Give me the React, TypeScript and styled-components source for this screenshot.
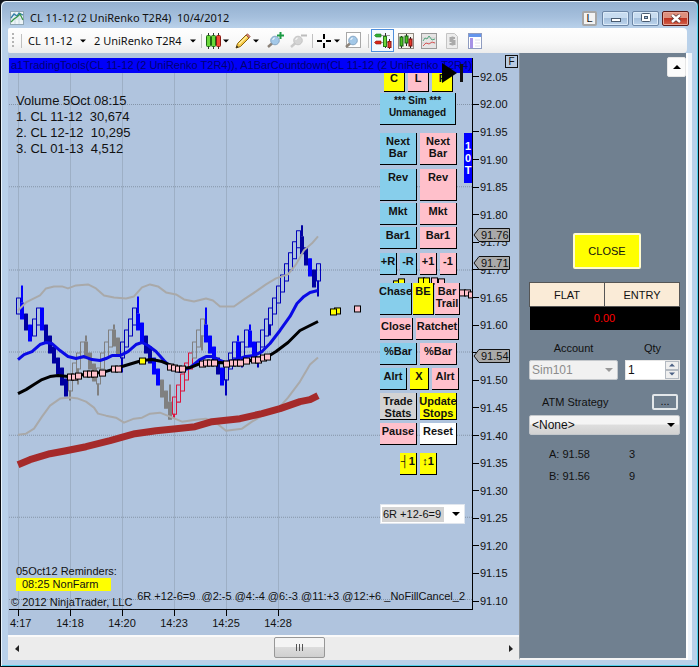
import React from "react";
import styled, { createGlobalStyle, css } from "styled-components";

const GlobalStyle = createGlobalStyle`
  *, *::before, *::after { box-sizing: border-box; }
  body { margin: 0; background: #10151c; font-family: "Liberation Sans", Arial, sans-serif; font-size: 11px; color: #111; }
  button, input, select { font: inherit; color: inherit; margin: 0; padding: 0; border-radius: 0; }
  h1 { margin: 0; }
`;

const AppWindow = styled.main`
  display: flex;
  flex-direction: column;
  min-height: 100vh;
  padding: 1px 6px 6px;
  border: 1px solid #0a0d12;
  border-radius: 6px 6px 0 0;
  background: #b9d1ea;
  box-shadow: inset 1px 1px 0 #eaf5fd, inset -1px -1px 0 #4fd2ee;
`;

const TitleBar = styled.header`
  display: flex;
  align-items: center;
  gap: 6px;
  height: 26px;
  margin: 0 -5px;
  padding: 6px 8px 0 8px;
  border-radius: 5px 5px 0 0;
  background: linear-gradient(#93b0d0, #a6c0dd 60%, #b9d1ea);
`;

const Title = styled.h1`
  flex: 1;
  font: 400 11px/18px "Noto Sans", sans-serif;
  white-space: pre;
`;

const CaptionGroup = styled.div`
  display: flex;
  align-items: center;
  gap: 3px;
`;

const CaptionButton = styled.button<{ $kind?: "close" | "link" }>`
  display: flex;
  align-items: center;
  justify-content: center;
  width: 27px;
  height: 15px;
  border: 1px solid #6c86a6;
  border-radius: 2px;
  box-shadow: inset 0 0 0 1px #dcebf9;
  background: linear-gradient(#c8dcf0 45%, #a5c0dd 50%, #bcd4ec);
  ${(p) => p.$kind === "close" && css`
    border-color: #5d1a16;
    box-shadow: inset 0 0 0 1px #e8a596;
    background: linear-gradient(#dd8f7d 45%, #bf3320 50%, #d2604a);
  `}
  ${(p) => p.$kind === "link" && css`
    width: 15px;
    margin-right: 2px;
    border: 2px solid #a6a6a6;
    box-shadow: none;
    background: #f3f3f3;
    font-size: 11px;
  `}
`;

const Toolbar = styled.nav`
  display: flex;
  align-items: center;
  height: 25px;
  margin: 0 5px 0 1px;
  padding-left: 4px;
  background: linear-gradient(#fefefe, #f8f8f8 60%, #ececec);
  border-radius: 2px 4px 4px 2px;
`;

const Grip = styled.span`
  width: 2px;
  height: 15px;
  background: repeating-linear-gradient(#b4b4b4 0 2px, transparent 2px 4px);
`;

const Divider = styled.span<{ $before?: number; $after?: number }>`
  width: 1px;
  height: 14px;
  margin: 0 ${(p) => p.$after ?? 4}px 0 ${(p) => p.$before ?? 4}px;
  background: #c0c0c0;
`;

const MenuButton = styled.button<{ $width: number; $gapAfter?: number }>`
  display: flex;
  align-items: center;
  justify-content: space-between;
  width: ${(p) => p.$width}px;
  height: 22px;
  margin-right: ${(p) => p.$gapAfter ?? 0}px;
  border: 0;
  background: none;
  font: 11px "Noto Sans", sans-serif;
  white-space: nowrap;
`;

const ToolButton = styled.button<{ $active?: boolean }>`
  display: flex;
  align-items: center;
  justify-content: center;
  width: 23px;
  height: 23px;
  border: 1px solid ${(p) => (p.$active ? "#4f8fdc" : "transparent")};
  background: ${(p) => (p.$active ? "#f4f9ff" : "none")};
`;

const Workspace = styled.div`
  display: flex;
  flex: 1;
  margin-left: 1px;
`;

const ChartPanel = styled.section`
  display: flex;
  flex: 1;
  flex-direction: column;
  min-width: 0;
  background: #b0c4de;
`;

const ChartBody = styled.div`
  display: grid;
  flex: 1;
  grid-template-columns: 1fr 46px;
  grid-template-rows: 1fr 25px;
  padding: 5px 0 0 1px;
`;

const Plot = styled.div`
  position: relative;
  min-width: 0;
  border: solid #000;
  border-width: 0 1px 1px 0;
`;

const ChartDrawing = styled.svg`
  position: absolute;
  inset: 0;
  width: 100%;
  height: 100%;
`;

const Banner = styled.div`
  position: relative;
  z-index: 1;
  height: 15px;
  padding-left: 2px;
  overflow: hidden;
  background: #0000fa;
  color: #000074;
  font-size: 11px;
  line-height: 14px;
  white-space: nowrap;
`;

const VolumeNote = styled.div`
  position: relative;
  padding: 20px 0 0 7px;
  font-size: 13px;
  line-height: 16px;
  white-space: pre;
`;

const Footnotes = styled.div`
  position: absolute;
  left: 2px;
  bottom: 0;
  font-size: 11px;
  line-height: 13px;
`;

const Reminder = styled.div`
  padding-left: 5px;
`;

const ReminderItem = styled.div`
  width: 95px;
  height: 13px;
  margin: 0 0 5px 5px;
  padding-left: 6px;
  background: #ff0;
`;

const StrategyNote = styled.div`
  position: absolute;
  right: 7px;
  bottom: 4px;
  font-size: 11px;
  line-height: 18px;
  white-space: pre;
`;

const TradePanel = styled.div`
  position: absolute;
  top: 12px;
  right: 7px;
  display: flex;
  flex-direction: column;
  width: 85px;
`;

const PadRow = styled.div<{ $top?: number; $gap?: number; $indent?: number; $height?: number }>`
  display: flex;
  gap: ${(p) => p.$gap ?? 3}px;
  height: ${(p) => p.$height ?? 22}px;
  margin-top: ${(p) => p.$top ?? 3}px;
  padding-left: ${(p) => p.$indent ?? 0}px;
`;

const tones = { sky: "#87ceeb", pink: "#ffc0cb", yellow: "#ffff00", gray: "#d3d3d3", white: "#ffffff" };
type Tone = keyof typeof tones;

const PadButton = styled.button<{ $tone: Tone; $width: number; $small?: boolean }>`
  display: flex;
  flex: none;
  flex-direction: column;
  align-items: center;
  width: ${(p) => p.$width}px;
  padding-top: 2px;
  border: solid #000;
  border-width: 0 1px 1px 0;
  background: ${(p) => tones[p.$tone]};
  font-size: ${(p) => (p.$small ? 10 : 11)}px;
  font-weight: 700;
  line-height: 12px;
  white-space: nowrap;
`;

const SelectShell = styled.div<{ $look: "plain" | "disabled" | "raised" }>`
  position: relative;
  display: flex;
  align-items: center;
  height: 20px;
  border: 1px solid ${(p) => (p.$look === "plain" ? "#e0e6ee" : "#c4c8cc")};
  border-radius: ${(p) => (p.$look === "plain" ? 0 : 2)}px;
  background: ${(p) =>
    p.$look === "plain" ? "#fff" : p.$look === "disabled" ? "#f1f1f1" : "linear-gradient(#f5f5f5 45%, #dedede 50%, #d2d2d2)"};
  color: ${(p) => (p.$look === "disabled" ? "#8c8c8c" : "#111")};
  select {
    flex: 1;
    min-width: 0;
    padding: 0 2px;
    appearance: none;
    border: 0;
    background: none;
    font-size: ${(p) => (p.$look === "plain" ? 11 : 12)}px;
    opacity: 1;
  }
  svg { position: absolute; right: 4px; pointer-events: none; }
`;

const PresetSelect = styled(SelectShell)`
  margin-top: 29px;
  select { flex: 0 0 62px; height: 15px; margin-left: 1px; padding: 0 1px; background: #d3d3d3; }
`;

const TickBadge = styled.div`
  position: absolute;
  top: 75px;
  right: 0;
  display: flex;
  flex-direction: column;
  width: 8px;
  height: 50px;
  padding-top: 7px;
  background: #00f;
  color: #fff;
  font: 700 11px/12px "Liberation Sans", Arial, sans-serif;
  text-align: center;
`;

const PlayMark = styled.svg`
  position: absolute;
  z-index: 2;
  top: 5px;
  right: 9px;
`;

const PriceAxis = styled.div`
  position: relative;
  display: flex;
  flex-direction: column;
  grid-column: 2;
  margin: 5px 0 -5px;
`;

const Price = styled.span`
  display: flex;
  flex: 1;
  align-items: center;
  gap: 1px;
  &::before { content: ""; width: 6px; height: 1px; background: #000; }
`;

const PriceTag = styled.div<{ $top: number }>`
  position: absolute;
  z-index: 1;
  top: ${(p) => p.$top}px;
  left: 0;
  width: 37px;
  height: 14px;
  padding-left: 8px;
  line-height: 14px;
  svg { position: absolute; inset: 0; z-index: -1; }
`;

const FixedButton = styled.button`
  position: absolute;
  top: -8px;
  right: 1px;
  width: 13px;
  height: 13px;
  border: 1px solid #111;
  background: #b9cbe2;
  font-size: 10px;
  line-height: 10px;
`;

const TimeAxis = styled.div`
  display: flex;
  overflow: hidden;
  line-height: 14px;
`;

const Time = styled.span`
  width: 52px;
  text-align: center;
  &::before { content: ""; display: block; width: 1px; height: 6px; margin: 0 auto; background: #000; }
  &:first-child { width: 35px; padding-left: 1px; text-align: left; }
  &:first-child::before { margin-left: 8px; }
`;

const ScrollBar = styled.div`
  display: flex;
  height: 25px;
  border-top: 2px solid #fafafa;
  background: #ececec;
`;

const ScrollArrow = styled.button`
  width: 17px;
  border: 0;
  background: none;
  line-height: 0;
`;

const ScrollTrack = styled.div`
  display: grid;
  flex: 1;
  grid-template-columns: 249fr 51px 177fr;
`;

const ScrollThumb = styled.button`
  grid-column: 2;
  height: 21px;
  border: 1px solid #979797;
  border-radius: 2px;
  background: linear-gradient(#f4f4f4 45%, #dcdcdc 50%, #cfcfcf);
  line-height: 0;
`;

const SidePanel = styled.aside`
  display: flex;
  flex-direction: column;
  width: 167px;
  padding: 0 6px 0 9px;
  border-left: 1px solid #8b939a;
  border-bottom: 2px solid #f4f4f4;
  background: #708090;
`;

const RightGutter = styled.div`
  width: 6px;
  background: #eef4fb;
  border-left: 2px solid #fff;
`;

const UpButton = styled.button`
  align-self: flex-end;
  width: 19px;
  height: 20px;
  margin: 4px -6px 0 0;
  border: 1px solid #e6e6e6;
  border-radius: 2px;
  background: #fbfbfb;
  line-height: 0;
`;

const CloseButton = styled.button`
  width: 68px;
  height: 36px;
  margin: 156px 0 0 44px;
  border: 2px solid #fffbd0;
  border-radius: 2px;
  background: #ff0;
`;

const PositionTable = styled.table`
  width: 151px;
  margin-top: 13px;
  border-collapse: collapse;
  text-align: center;
  th { width: 50%; height: 24px; padding: 0; border: 1px solid #555; background: #faebd7; font-weight: 400; }
  td { height: 23px; padding: 0; background: #000; color: #f00; }
`;

const FieldGrid = styled.div`
  display: grid;
  grid-template-columns: 89px 55px;
  column-gap: 7px;
  margin-top: 11px;
  label { height: 19px; line-height: 14px; text-align: center; }
`;

const Spinner = styled.div`
  display: flex;
  height: 20px;
  border: 1px solid #e6e6e6;
  background: #fff;
  input { flex: 1; min-width: 0; padding: 0 2px; border: 0; background: none; font-size: 12px; }
`;

const SpinButtons = styled.div`
  display: grid;
  width: 14px;
  button { border: 1px solid #b4bac2; background: #efefef; line-height: 0; }
`;

const StrategyHead = styled.div`
  display: flex;
  align-items: center;
  justify-content: space-between;
  height: 16px;
  margin: 14px 2px 5px 13px;
`;

const MoreButton = styled.button`
  width: 26px;
  height: 16px;
  border: 2px solid #e3e7ea;
  border-radius: 2px;
  background: #708090;
  line-height: 9px;
`;

const Quotes = styled.dl`
  display: grid;
  grid-template-columns: 80px 1fr;
  row-gap: 8px;
  margin: 12px 0 0 20px;
  line-height: 14px;
  dt, dd { margin: 0; }
`;

const Caret = ({ fill = "#000", up = false, size = 6 }: { fill?: string; up?: boolean; size?: number }) => (
  <svg width={size + 2} height="6" viewBox="0 0 8 6" aria-hidden="true">
    <path d={up ? "M0 5L4 1L8 5Z" : "M0 1H8L4 5Z"} fill={fill} />
  </svg>
);

const CandleStyleIcon = () => (
  <svg width="16" height="16" viewBox="0 0 16 16" aria-hidden="true">
    <path d="M3.500 0v16M8.500 0v16M13.500 0v16" stroke="#333" />
    <rect x="1.500" y="2.500" width="4" height="11" rx="1" fill="#6bd83a" stroke="#1e6a14" />
    <rect x="6.500" y="2.500" width="4" height="11" rx="1" fill="#6bd83a" stroke="#1e6a14" />
    <rect x="11.500" y="2.500" width="4" height="11" rx="1" fill="#f04a3a" stroke="#8c1a12" />
  </svg>
);

const DataSeriesIcon = () => (
  <svg width="16" height="16" viewBox="0 0 16 16" aria-hidden="true">
    <rect x=".5" y=".5" width="15" height="15" fill="#f4f1ea" stroke="#8f8a82" />
    <path d="M3.500 3v12M8.500 1v12M12.500 4v11" stroke="#222" />
    <rect x="2" y="4" width="3" height="9" fill="#4dc022" stroke="#145c10" />
    <rect x="7" y="3" width="3" height="7" fill="#4dc022" stroke="#145c10" />
    <rect x="11" y="6" width="3" height="7" fill="#e8392a" stroke="#771010" />
  </svg>
);

const PencilIcon = () => (
  <svg width="16" height="16" viewBox="0 0 16 16" aria-hidden="true">
    <path d="M1 15L2.500 10.500L11 2L14 5L5.500 13.500Z" fill="#f6c945" stroke="#8a6410" />
    <path d="M4 11L12 3.200" stroke="#fff0a6" strokeWidth="1.300" />
    <path d="M11 2L12.500 .8L15.200 3.500L14 5Z" fill="#d98572" stroke="#8c4a3a" strokeWidth=".7" />
    <path d="M1 15l.8-2.500 1.700 1.700Z" fill="#222" />
  </svg>
);

const LensIcon = ({ mode }: { mode: "in" | "out" | "page" }) => {
  const muted = mode === "out";
  return (
    <svg width="18" height="17" viewBox="0 0 18 17" aria-hidden="true">
      {mode === "page" && <rect x="2.500" y=".5" width="14" height="15" fill="#fff" stroke="#a8a8a8" />}
      <path d="M2 15L6.500 11" stroke={muted ? "#c9c9c9" : "#8c8278"} strokeWidth="2.400" />
      <circle cx="9" cy="8.500" r="4.300" fill={muted ? "#d4d4d4" : "#a3c8e8"} stroke={muted ? "#c4c4c4" : "#86a6c4"} />
      <path d="M6.800 8a2.200 2.200 0 0 1 2-2" stroke="#fff" fill="none" />
      {mode === "in" && <path d="M14.500 0v7M11 3.500h7" stroke="#1c9b45" strokeWidth="2" />}
      {muted && <path d="M12 3.500h6" stroke="#bdbdbd" strokeWidth="2" />}
    </svg>
  );
};

const TraderIcon = () => (
  <svg width="18" height="18" viewBox="0 0 18 18" aria-hidden="true">
    <path d="M1 3.500h15M1 10.500h15" stroke="#9a9a9a" />
    <path d="M2 2h5v3H2L.5 3.500Z" fill="#2fae33" stroke="#1c7a20" strokeWidth=".6" />
    <path d="M2 9h5v3H2L.5 10.500Z" fill="#d8271c" stroke="#8d1710" strokeWidth=".6" />
    <path d="M11.500 1v15M15.500 7v10" stroke="#333" />
    <rect x="9.500" y="4.500" width="3" height="10" fill="#6ed53b" stroke="#267a19" />
    <rect x="14" y="9.500" width="3" height="6" fill="#e23b2c" stroke="#8d1710" />
  </svg>
);

const LogoIcon = () => (
  <svg width="14" height="14" viewBox="0 0 14 14" aria-hidden="true">
    <rect x=".5" y=".5" width="13" height="13" fill="#edf5f8" stroke="#8ea4b2" />
    <path d="M1 4h12M1 8h12M5 1v12M9 1v12" stroke="#cbdae3" />
    <path d="M1 7L4 3L7 5L9 2L13 4" stroke="#347fa8" fill="none" strokeWidth="1.300" />
    <path d="M1 11L4 8L7 6L10 3L13 9" stroke="#3a9648" fill="none" strokeWidth="1.300" />
  </svg>
);

type Candle = [x: number, top: number, bottom: number, kind: string, wickTop?: number, wickBottom?: number];

// Kinds: h/H hollow blue/grey, r hollow red, b/d solid blue/dark blue, g solid grey.
const candles: Candle[] = [
  [16, 297, 313, "h"], [20, 302, 318, "b", 285], [24, 313, 329, "d"], [28, 324, 340, "b"], [32, 318, 335, "h"],
  [36, 307, 324, "h"], [40, 307, 329, "b"], [44, 324, 341, "d"], [48, 335, 352, "d"], [52, 346, 362, "d"],
  [56, 357, 373, "d"], [60, 367, 384, "d"], [64, 378, 395, "d"], [68, 373, 390, "H", 373, 400], [72, 362, 379, "H"],
  [76, 352, 368, "H", 352, 384], [80, 341, 357, "H"], [84, 341, 357, "g", 335], [88, 352, 368, "g"], [92, 363, 380, "g"],
  [96, 367, 383, "H", 367, 395], [100, 352, 368, "H"], [104, 341, 357, "H"], [108, 329, 346, "H"], [112, 329, 345, "g", 324],
  [116, 337, 353, "g"], [120, 341, 357, "h", 341, 372], [124, 329, 346, "h"], [128, 318, 335, "h"], [132, 307, 324, "h"],
  [136, 313, 329, "b", 296], [140, 322, 341, "b"], [144, 335, 352, "d"], [148, 346, 362, "d"], [152, 357, 373, "b"],
  [156, 368, 384, "b"], [160, 379, 396, "g"], [164, 390, 407, "g"], [168, 401, 418, "g", 384], [172, 396, 413, "r", 396, 417],
  [176, 384, 401, "r"], [180, 373, 390, "r"], [184, 362, 379, "r"], [188, 352, 368, "r"], [192, 341, 357, "H"],
  [196, 329, 346, "H"], [200, 318, 335, "H", 318, 350], [204, 324, 341, "b", 307], [208, 335, 352, "b"], [212, 346, 363, "b"],
  [216, 357, 373, "d"], [220, 367, 384, "b"], [224, 362, 379, "h", 362, 395], [228, 352, 368, "h"], [232, 341, 357, "h"],
  [236, 341, 357, "b", 335], [240, 341, 357, "h", 341, 367], [244, 329, 346, "h"], [248, 330, 346, "b", 324], [252, 341, 357, "b"],
  [256, 341, 357, "h", 341, 367], [260, 329, 346, "h"], [264, 318, 335, "h"], [268, 307, 324, "h", 307, 335], [272, 297, 313, "h"],
  [276, 285, 302, "h"], [280, 274, 291, "h"], [284, 263, 280, "h"], [288, 252, 269, "h"], [292, 241, 258, "h"],
  [296, 230, 247, "h"], [300, 236, 253, "d", 225], [304, 247, 264, "d"], [308, 258, 275, "b"], [312, 269, 286, "d"],
  [316, 263, 280, "h", 263, 296],
];

const candleColor: Record<string, string> = { h: "#0000b8", H: "#808080", r: "#dc143c", b: "#0000ff", d: "#0000a0", g: "#808080" };

const markers: [number, number, string?][] = [
  [70, 376], [74, 376], [78, 375], [86, 373], [90, 373], [94, 373], [102, 372], [114, 368], [118, 368], [142, 360, "#ff0"],
  [170, 366], [174, 367], [178, 368], [182, 368], [202, 363], [206, 362], [210, 362], [214, 362], [226, 363], [232, 362],
  [236, 362], [240, 362], [246, 360], [254, 359], [258, 359], [263, 357], [267, 356], [337, 310, "#ff0"], [333, 311, "#ff0"],
  [357, 308], [396, 283, "#ff0"], [401, 281, "#ff0"], [421, 280, "#ff0"], [426, 280, "#ff0"], [434, 280], [441, 281],
  [462, 292], [467, 292], [471, 294],
];

const upperBand = "18,310 26,302 34,298 40,295 46,288 54,286 62,286 68,288 76,285 88,284 96,288 104,295 114,297 126,298 134,296 142,287 150,284 158,286 166,292 176,294 184,299 194,301 206,298 213,300 220,306 234,306 244,299 256,291 266,284 276,278 288,274 296,264 304,250 312,243 318,236";
const lowerBand = "18,434 26,433 34,428 42,416 50,405 60,398 70,397 78,398 86,401 94,407 98,413 106,415 116,417 124,422 134,418 142,417 150,413 160,412 170,416 182,421 196,419 206,418 216,422 226,430 242,428 252,421 264,414 280,406 288,397 300,381 310,364 318,357";
const slowAverage = "18,464 30,459 50,453 66,450 86,446 110,440 135,433 156,430 176,428 195,426 212,421 240,418 262,413 280,408 300,401 310,399 318,395";
const midAverage = "18,393 26,389 34,384 42,379 50,376 58,375 68,376 78,375 90,373 102,372 112,369 122,366 132,363 142,360 152,359 162,361 172,365 182,368 190,367 200,363 220,362 228,363 244,362 256,358 268,356 276,351 288,342 300,330 310,325 318,321";
const fastAverage = "18,359 24,354 32,351 40,344 46,342 52,343 60,350 68,356 76,358 84,356 92,359 100,360 106,358 112,355 120,355 128,351 136,344 142,342 148,345 156,351 164,360 172,368 180,371 190,367 200,359 206,356 213,356 218,359 226,362 236,359 246,356 254,355 262,351 270,343 280,330 290,316 297,303 304,296 310,292 318,290";

const PriceChart = () => (
  <ChartDrawing viewBox="9 58 463 550" preserveAspectRatio="none" role="img" aria-label="CL 11-12 price chart">
    {[18, 70, 122, 174, 226, 278].map((x) => (
      <path key={x} d={`M${x + 0.5} 58V608`} stroke="#9dafc5" />
    ))}
    {[104, 186, 269, 351, 434, 516, 598].map((y) => (
      <path key={y} d={`M9 ${y + 0.5}H472`} stroke="#8494a8" strokeDasharray="1 1" />
    ))}
    <g fill="none" strokeLinejoin="round">
      {candles.map(([x, top, bottom, kind, wickTop = top, wickBottom = bottom]) => {
        const color = candleColor[kind];
        const hollow = "hHr".includes(kind);
        return (
          <g key={x}>
            {wickTop < top && <path d={`M${x + 2} ${wickTop}V${top}`} stroke={color} strokeWidth="2" />}
            {wickBottom > bottom && <path d={`M${x + 2} ${bottom}V${wickBottom}`} stroke={color} strokeWidth="2" />}
            <rect
              x={x + 0.5} y={top + 0.5} width={hollow ? 4 : 3} height={bottom - top}
              fill={hollow ? "none" : color} stroke={color}
            />
          </g>
        );
      })}
      <polyline points={upperBand} stroke="#a9a9a9" strokeWidth="2" />
      <polyline points={lowerBand} stroke="#a9a9a9" strokeWidth="2" />
      <polyline points={slowAverage} stroke="#a52a2a" strokeWidth="7" />
      <polyline points={fastAverage} stroke="#0a0ae6" strokeWidth="3" />
      <polyline points={midAverage} stroke="#000" strokeWidth="3" />
    </g>
    {markers.map(([x, y, fill = "#ffc0cb"]) => (
      <rect key={x} x={x - 2.5} y={y - 2.5} width="6" height="6" fill={fill} stroke="#000" />
    ))}
  </ChartDrawing>
);

type Pad = { text: string[]; tone: Tone; width: number };
type PadLine = { top?: number; height?: number; gap?: number; indent?: number; small?: boolean; pads: Pad[] };

const pad = (text: string, tone: Tone, width: number): Pad => ({ text: text.split("|"), tone, width });

const padLines: PadLine[] = [
  { top: 0, indent: 4, pads: [pad("C", "yellow", 21), pad("L", "pink", 21), pad("F", "yellow", 21)] },
  { top: 1, height: 32, small: true, pads: [pad("*** Sim ***|Unmanaged", "sky", 76)] },
  { top: 8, height: 32, pads: [pad("Next|Bar", "sky", 37), pad("Next|Bar", "pink", 37)] },
  { top: 4, height: 32, pads: [pad("Rev", "sky", 37), pad("Rev", "pink", 37)] },
  { top: 2, pads: [pad("Mkt", "sky", 37), pad("Mkt", "pink", 37)] },
  { top: 2, pads: [pad("Bar1", "sky", 37), pad("Bar1", "pink", 37)] },
  { top: 4, pads: [pad("+R", "sky", 17), pad("-R", "sky", 17), pad("+1", "pink", 17), pad("-1", "pink", 17)] },
  { top: 8, height: 32, gap: 1, pads: [pad("Chase", "sky", 32), pad("BE", "yellow", 21), pad("Bar|Trail", "pink", 25)] },
  { pads: [pad("Close", "pink", 33), pad("Ratchet", "pink", 43)] },
  { pads: [pad("%Bar", "sky", 37), pad("%Bar", "pink", 37)] },
  { pads: [pad("Alrt", "sky", 27), pad("X", "yellow", 19), pad("Alrt", "pink", 27)] },
  { height: 27, pads: [pad("Trade|Stats", "gray", 37), pad("Update|Stops", "yellow", 37)] },
  { pads: [pad("Pause", "pink", 37), pad("Reset", "white", 37)] },
  { top: 8, indent: 20, pads: [pad("┤1", "yellow", 17), pad("↕1", "yellow", 17)] },
];

const prices = Array.from({ length: 20 }, (_, i) => (92.05 - i * 0.05).toFixed(2));

const tags = [
  { value: "91.76", top: 165 },
  { value: "91.71", top: 193 },
  { value: "91.54", top: 286 },
];

export default function App() {
  return (
    <>
      <GlobalStyle />
      <AppWindow>
        <TitleBar>
          <LogoIcon />
          <Title>{"CL 11-12 (2 UniRenko T2R4)  10/4/2012"}</Title>
          <CaptionGroup>
            <CaptionButton $kind="link">L</CaptionButton>
            <CaptionButton aria-label="Minimize">
              <svg width="12" height="9"><rect x="1.500" y="4.500" width="9" height="3" fill="#fff" stroke="#495b70" /></svg>
            </CaptionButton>
            <CaptionButton aria-label="Maximize">
              <svg width="12" height="10"><rect x="1.500" y=".5" width="9" height="8" rx="1" fill="#fff" stroke="#495b70" /><rect x="4.500" y="3.500" width="3" height="2" fill="#a5c0dd" stroke="#495b70" /></svg>
            </CaptionButton>
            <CaptionButton $kind="close" aria-label="Close window">
              <svg width="12" height="9"><path d="M2 1l8 7M10 1L2 8" stroke="#5c3030" strokeWidth="4" /><path d="M2 1l8 7M10 1L2 8" stroke="#fff" strokeWidth="2.400" /></svg>
            </CaptionButton>
          </CaptionGroup>
        </TitleBar>

        <Toolbar aria-label="Chart tools">
          <Grip />
          <Divider $before={7} $after={6} />
          <MenuButton $width={58} $gapAfter={8}>CL 11-12 <Caret size={4} /></MenuButton>
          <MenuButton $width={102}>2 UniRenko T2R4 <Caret size={4} /></MenuButton>
          <Divider $before={5} $after={3} />
          <MenuButton $width={24} $gapAfter={6} aria-label="Chart style"><CandleStyleIcon /><Caret size={4} /></MenuButton>
          <MenuButton $width={24} $gapAfter={4} aria-label="Drawing tools"><PencilIcon /><Caret size={4} /></MenuButton>
          <ToolButton aria-label="Zoom in"><LensIcon mode="in" /></ToolButton>
          <ToolButton aria-label="Zoom out"><LensIcon mode="out" /></ToolButton>
          <Divider $before={3} $after={4} />
          <MenuButton $width={23} $gapAfter={1} aria-label="Cross hair">
            <svg width="15" height="14" viewBox="0 0 15 14"><path d="M7 0v5M7 9v5M0 7h5M9 7h5" stroke="#000" strokeWidth="2" /></svg>
            <Caret size={4} />
          </MenuButton>
          <ToolButton aria-label="Zoom window"><LensIcon mode="page" /></ToolButton>
          <Divider $before={4} $after={2} />
          <ToolButton $active aria-label="Chart trader"><TraderIcon /></ToolButton>
          <ToolButton aria-label="Data series"><DataSeriesIcon /></ToolButton>
          <ToolButton aria-label="Indicators">
            <svg width="16" height="16"><rect x=".5" y=".5" width="15" height="15" fill="#e6e4e4" stroke="#999" /><path d="M1 5h14M1 10h14" stroke="#cfcfcf" /><path d="M2 8l2-3 2 1 2-3 3 4 3-1" stroke="#52a67c" fill="none" /><path d="M2 13l3-3 3 1 3-2 3 1" stroke="#d75757" fill="none" /></svg>
          </ToolButton>
          <ToolButton aria-label="Strategies">
            <svg width="14" height="16"><path d="M1.500 .5h8l3 3v12h-11Z" fill="#ececec" stroke="#c4c4c4" /><path d="M10 5H5.500v3H9.500v3H4.500M7.500 3.500v9" fill="none" stroke="#aaa" strokeWidth="2" /></svg>
          </ToolButton>
          <ToolButton aria-label="Properties">
            <svg width="14" height="16"><rect x=".5" y=".5" width="13" height="15" fill="#fff" stroke="#8f9cc0" /><rect x="1" y="1" width="12" height="3" fill="#6495ed" /><rect x="2" y="5" width="3" height="10" fill="#a692e6" /><path d="M7 7h5M7 10h5M7 13h5" stroke="#dedeea" /></svg>
          </ToolButton>
        </Toolbar>

        <Workspace>
          <ChartPanel>
            <ChartBody>
              <Plot>
                <PriceChart />
                <Banner>a1TradingTools(CL 11-12 (2 UniRenko T2R4)), A1BarCountdown(CL 11-12 (2 UniRenko T2R4))</Banner>
                <VolumeNote>{"Volume 5Oct 08:15\n1. CL 11-12  30,674\n2. CL 12-12  10,295\n3. CL 01-13  4,512"}</VolumeNote>
                <TradePanel>
                  {padLines.map((line, i) => (
                    <PadRow key={i} $top={line.top} $height={line.height} $gap={line.gap} $indent={line.indent}>
                      {line.pads.map((p, j) => (
                        <PadButton key={j} $tone={p.tone} $width={p.width} $small={line.small}>
                          {p.text.map((t) => <span key={t}>{t}</span>)}
                        </PadButton>
                      ))}
                    </PadRow>
                  ))}
                  <PresetSelect $look="plain">
                    <select aria-label="Preset" defaultValue="a"><option value="a">6R +12-6=9</option></select>
                    <Caret />
                  </PresetSelect>
                </TradePanel>
                <PlayMark width="22" height="20" viewBox="0 0 22 20" aria-hidden="true">
                  <path d="M1 0L16 10L1 20Z" fill="#000" /><rect x="19" y="1" width="3" height="18" fill="#111" />
                </PlayMark>
                <TickBadge><span>1</span><span>0</span><span>T</span></TickBadge>
                <Footnotes>
                  <Reminder>05Oct12 Reminders:</Reminder>
                  <ReminderItem>08:25 NonFarm</ReminderItem>
                  <div>© 2012 NinjaTrader, LLC</div>
                </Footnotes>
                <StrategyNote>{"6R +12-6=9  @2:-5 @4:-4 @6:-3 @11:+3 @12:+6 _NoFillCancel_2"}</StrategyNote>
              </Plot>
              <PriceAxis>
                {prices.map((p) => <Price key={p}>{p}</Price>)}
                {tags.map((t) => (
                  <PriceTag key={t.value} $top={t.top}>
                    <svg width="37" height="14" aria-hidden="true"><path d="M1 7L6 .5H36.500V13.500H6Z" fill="#a9a9a9" stroke="#111" /></svg>
                    {t.value}
                  </PriceTag>
                ))}
                <FixedButton>F</FixedButton>
              </PriceAxis>
              <TimeAxis>
                {["4:17", "14:18", "14:20", "14:23", "14:25", "14:28"].map((t) => <Time key={t}>{t}</Time>)}
              </TimeAxis>
            </ChartBody>
            <ScrollBar>
              <ScrollArrow aria-label="Scroll left"><svg width="4" height="7"><path d="M4 0V7L0 4Z" fill="#222" /></svg></ScrollArrow>
              <ScrollTrack>
                <ScrollThumb aria-label="Scroll position">
                  <svg width="9" height="8"><path d="M1.500 0v7M4.500 0v7M7.500 0v7" stroke="#555" /></svg>
                </ScrollThumb>
              </ScrollTrack>
              <ScrollArrow aria-label="Scroll right"><svg width="4" height="7"><path d="M0 0V7L4 4Z" fill="#222" /></svg></ScrollArrow>
            </ScrollBar>
          </ChartPanel>

          <SidePanel>
            <UpButton aria-label="Collapse"><Caret up /></UpButton>
            <CloseButton>CLOSE</CloseButton>
            <PositionTable>
              <thead><tr><th>FLAT</th><th>ENTRY</th></tr></thead>
              <tbody><tr><td colSpan={2}>0.00</td></tr></tbody>
            </PositionTable>
            <FieldGrid>
              <label htmlFor="account">Account</label>
              <label htmlFor="qty">Qty</label>
              <SelectShell $look="disabled">
                <select id="account" disabled defaultValue="s"><option value="s">Sim101</option></select>
                <Caret fill="#999" />
              </SelectShell>
              <Spinner>
                <input id="qty" defaultValue="1" />
                <SpinButtons>
                  <button aria-label="Increase"><Caret up fill="#4d6185" size={4} /></button>
                  <button aria-label="Decrease"><Caret fill="#4d6185" size={4} /></button>
                </SpinButtons>
              </Spinner>
            </FieldGrid>
            <StrategyHead>
              <label htmlFor="atm">ATM Strategy</label>
              <MoreButton aria-label="Strategy options">...</MoreButton>
            </StrategyHead>
            <SelectShell $look="raised">
              <select id="atm" defaultValue="n"><option value="n">&lt;None&gt;</option></select>
              <Caret />
            </SelectShell>
            <Quotes>
              <dt>A: 91.58</dt><dd>3</dd>
              <dt>B: 91.56</dt><dd>9</dd>
            </Quotes>
          </SidePanel>
          <RightGutter />
        </Workspace>
      </AppWindow>
    </>
  );
}
